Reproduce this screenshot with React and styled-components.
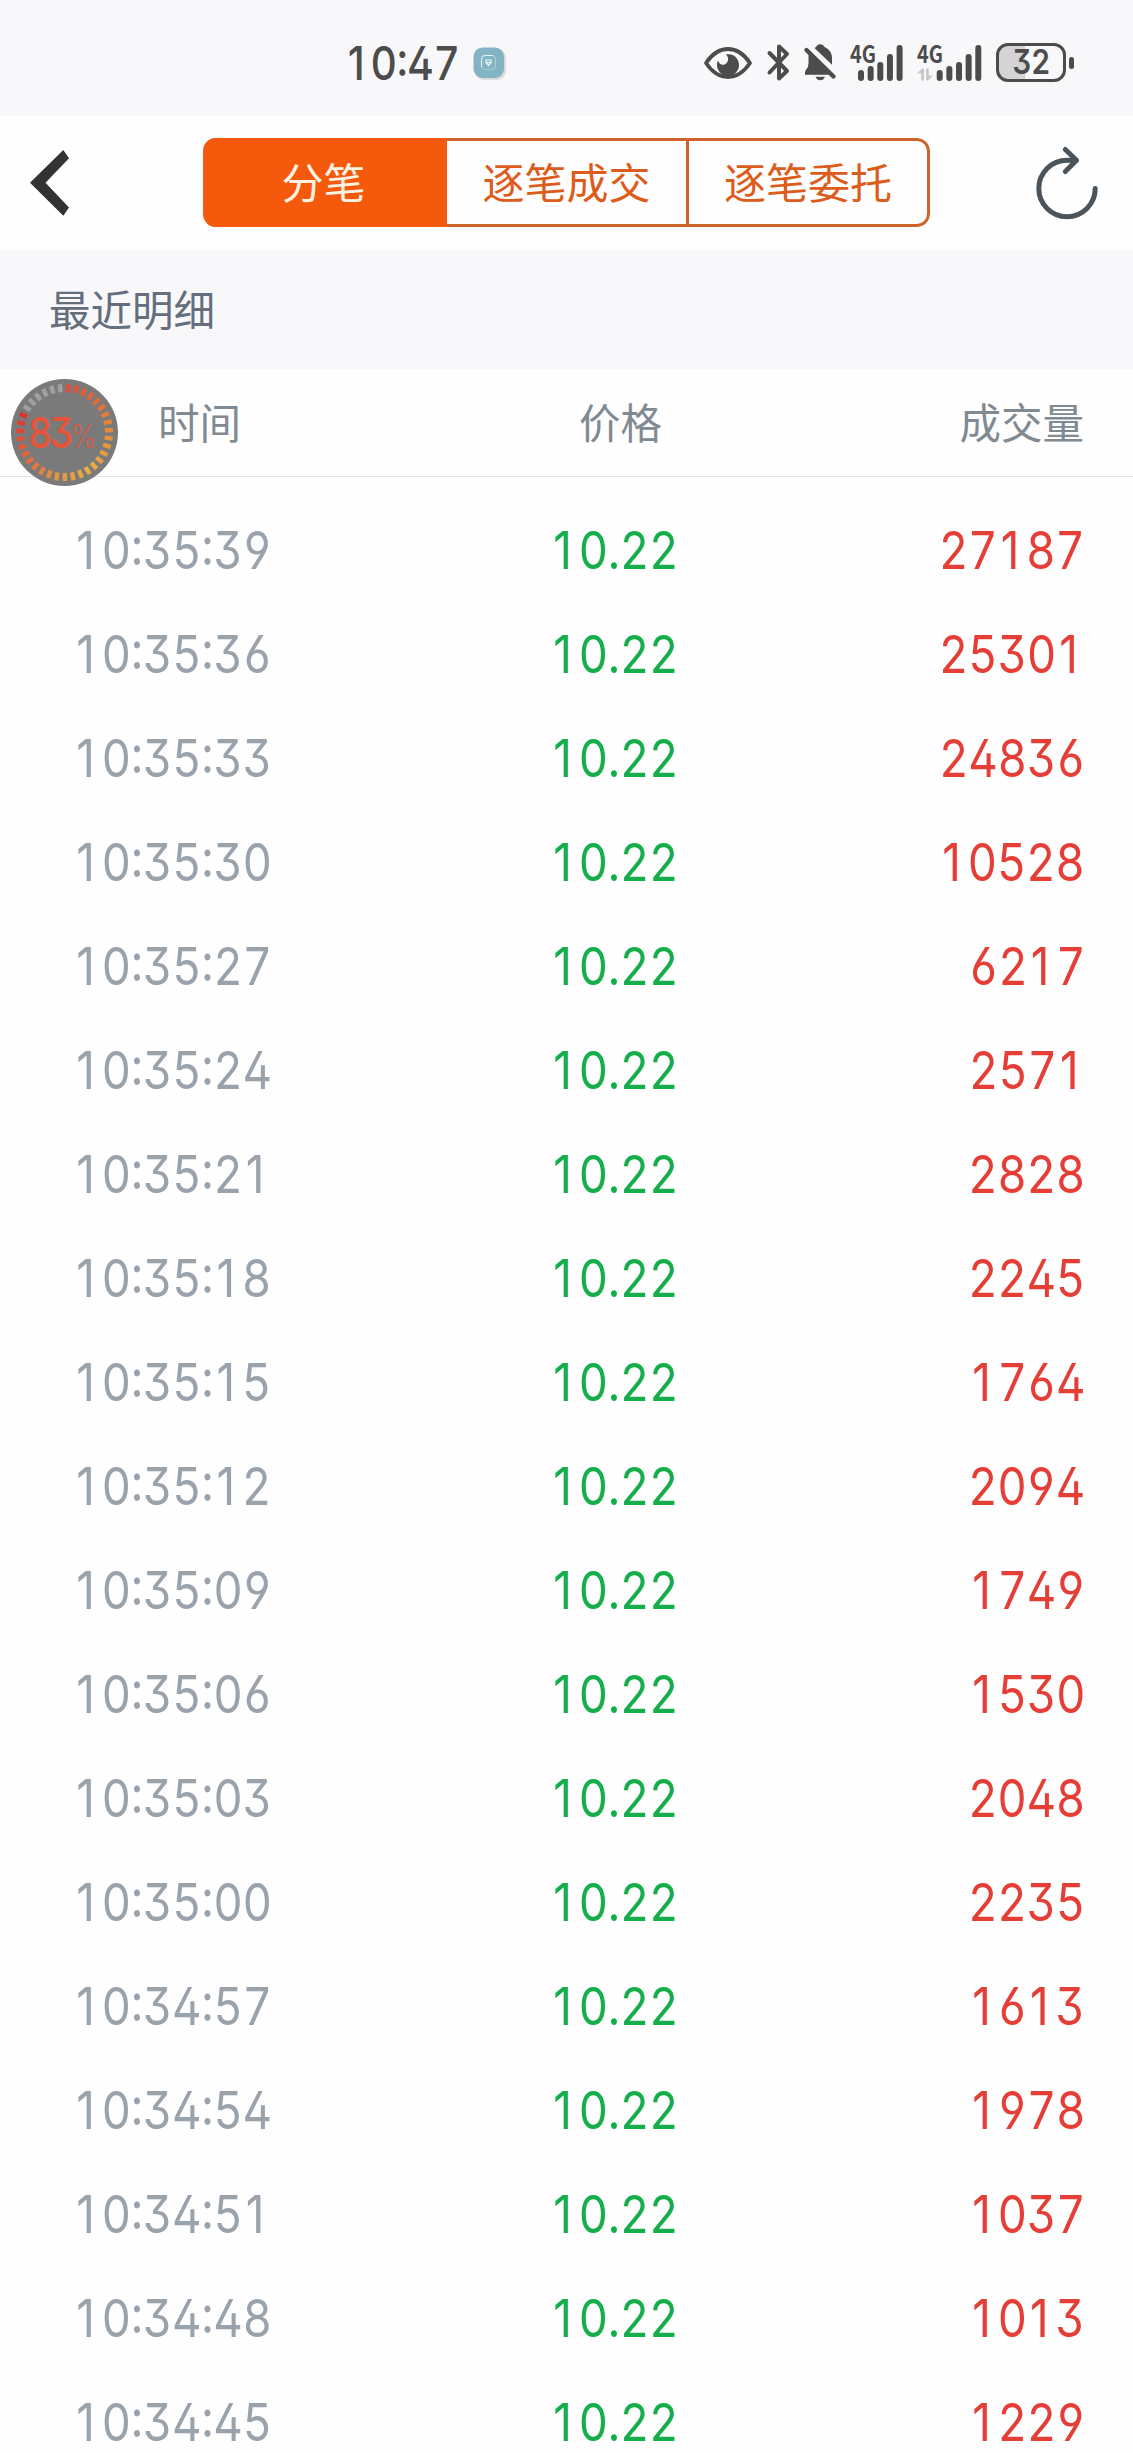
import React from 'react';
import styled, { createGlobalStyle } from 'styled-components';

const GlobalStyle = createGlobalStyle`
  * {
    box-sizing: border-box;
  }

  body {
    margin: 0;
    background: #fefefe;
    font-family: 'Noto Sans CJK SC', sans-serif;
  }
`;

const Screen = styled.div`
  position: relative;
  width: 1133px;
  height: 2453px;
  overflow: hidden;
  background: #fefefe;
`;

// Inter with the open digit shapes, narrowed a little
const Digits = styled.span`
  display: inline-block;
  font-family: 'Inter', sans-serif;
  font-feature-settings: 'tnum', 'calt', 'ss01', 'cv02', 'cv03', 'cv04';
  letter-spacing: -0.009em;
  white-space: nowrap;
  transform: scaleX(0.88);
  transform-origin: ${({ $origin }) => $origin || 'left'} center;
`;

// the tabular "1" has a foot, so take the plain one and centre it in a digit cell
const One = styled.span`
  display: inline-block;
  width: 0.625em;
  padding-right: 0.08em;
  font-feature-settings: 'tnum' 0;
  text-align: center;
`;

const StatusBar = styled.header`
  display: flex;
  align-items: center;
  height: 116px;
  padding: 9px 67px 0 345px;
  background: #f8f8fb;
  color: #4c4c4c;
`;

const Clock = styled(Digits)`
  width: 128px;
  font-size: 46.5px;
  font-weight: 520;
  line-height: 60px;
`;

const StatusIcons = styled.div`
  display: flex;
  align-items: center;
  margin-left: auto;
`;

const Icon = styled.svg`
  display: block;
  flex: none;
  margin-left: ${({ $gap }) => $gap || 0}px;
  overflow: visible;
`;

const Battery = styled.div`
  position: relative;
  display: flex;
  align-items: center;
  justify-content: center;
  width: 70px;
  height: 39px;
  margin-left: 15px;
  border: 3px solid #4c4c4c;
  border-radius: 12px;
  background: linear-gradient(to right, #d4d4d6 26px, transparent 26px);

  &::after {
    content: '';
    position: absolute;
    right: -11px;
    top: 11px;
    width: 5px;
    height: 12px;
    border-radius: 3px;
    background: #4c4c4c;
  }
`;

const BatteryLevel = styled(Digits)`
  font-size: 33.5px;
  font-weight: 600;
  line-height: 33px;
`;

const NavBar = styled.nav`
  display: flex;
  align-items: center;
  height: 134px;
  padding: 0 34px 1px 30px;
`;

const Tabs = styled.div`
  display: grid;
  grid-template-columns: 244px 242px 241px;
  height: 89px;
  margin-left: 134px;
  border-radius: 13px;
  overflow: hidden;
`;

const Tab = styled.button`
  padding: 0 0 4px;
  border: 3px solid ${({ $active }) => ($active ? '#f5590b' : '#cf632c')};
  border-left-width: 0;
  background: ${({ $active }) => ($active ? '#f5590b' : '#fefefe')};
  color: ${({ $active }) => ($active ? '#fff3e4' : '#dc5c1c')};
  font-family: inherit;
  font-size: 42px;
  line-height: 79px;

  &:last-child {
    border-radius: 0 13px 13px 0;
  }
`;

const SectionTitle = styled.h2`
  height: 119px;
  margin: 0;
  padding-left: 49px;
  background: #f8f8fb;
  color: #646e7c;
  font-size: 41.5px;
  font-weight: 400;
  line-height: 117px;
`;

const TableHead = styled.div`
  display: grid;
  grid-template-columns: 421px 1fr auto;
  align-items: center;
  height: 108px;
  padding: 0 49px 4px 158px;
  border-bottom: 1px solid #e4e5e6;
  color: #808a93;
  font-size: 41.5px;
`;

const TableBody = styled.div`
  padding-top: 22px;
`;

const Row = styled.div`
  display: grid;
  grid-template-columns: 477px 1fr auto;
  align-items: center;
  height: 104px;
  padding: 0 48px 0 73px;
`;

const Value = styled(Digits)`
  color: ${({ $color }) => $color};
  font-size: 52px;
  font-weight: 430;
  line-height: 64px;
`;

const Floating = styled.div`
  position: absolute;
  left: 11px;
  top: 379px;
  width: 107px;
  height: 107px;
`;

const FloatingLabel = styled(Digits)`
  position: absolute;
  left: 17px;
  top: 26px;
  color: #e8543a;
  font-size: 43px;
  font-weight: 450;
  letter-spacing: -0.08em;
  line-height: 54px;
`;

const Percent = styled.small`
  font-size: 32px;
  font-weight: 200;
`;

const trades = [
  ['10:35:39', '27187'],
  ['10:35:36', '25301'],
  ['10:35:33', '24836'],
  ['10:35:30', '10528'],
  ['10:35:27', '6217'],
  ['10:35:24', '2571'],
  ['10:35:21', '2828'],
  ['10:35:18', '2245'],
  ['10:35:15', '1764'],
  ['10:35:12', '2094'],
  ['10:35:09', '1749'],
  ['10:35:06', '1530'],
  ['10:35:03', '2048'],
  ['10:35:00', '2235'],
  ['10:34:57', '1613'],
  ['10:34:54', '1978'],
  ['10:34:51', '1037'],
  ['10:34:48', '1013'],
  ['10:34:45', '1229'],
];

const figures = (text) =>
  text.split(/(1)/).map((part, i) => (part === '1' ? <One key={i}>1</One> : part));

const AppBadge = () => (
  <Icon width="32" height="32" viewBox="0 0 32 32">
    <rect x="2" y="2" width="31" height="31" rx="9" fill="#dcdcd8" />
    <rect x="0.5" y="0.5" width="30.5" height="30.5" rx="9" fill="#83b4c3" />
    <rect x="8.5" y="8.5" width="14" height="14" rx="3.5" fill="none" stroke="#a9cdd7" />
    <path d="M8.5 20v-8q0-3.500 3.500-3.500h8" fill="none" stroke="#e6f3f6" />
    <path d="M13 13h5v2.500l-2.500 3-2.500-3zM13.500 15.500h4" fill="none" stroke="#eef8fa" strokeWidth="1.200" />
  </Icon>
);

const EyeIcon = () => (
  <Icon width="48" height="32" viewBox="0 0 48 32">
    <path
      d="M2 16C8 7 16 2 24 2s16 5 22 14c-6 9-14 14-22 14S8 25 2 16z"
      fill="none"
      stroke="#4c4c4c"
      strokeWidth="3.800"
      strokeLinejoin="round"
    />
    <path
      d="M22 7.500C29 6 35 11 35 18c0 6-5 11-11 11S13 24 13 18c0-2 .3-3 1-4.500 1 3.500 4 5 6.500 4 4-1.500 5-6.500 1.500-10z"
      fill="#4c4c4c"
    />
  </Icon>
);

const BluetoothIcon = () => (
  <Icon $gap={15} width="23" height="37" viewBox="0 0 23 37">
    <path
      d="M2.500 9l17.500 18-8 7.500V2.500l8 7.500L2.500 28.500"
      fill="none"
      stroke="#4c4c4c"
      strokeWidth="4"
      strokeLinecap="round"
      strokeLinejoin="round"
    />
  </Icon>
);

const MutedIcon = () => (
  <Icon $gap={14} width="32" height="37" viewBox="0 0 32 37">
    <path d="M4.500 10l19 18.500H1.500q-1-1.500 1-3.500 2-2 2-6z" fill="#4c4c4c" />
    <path d="M1 28h24v2.800H1z" fill="#4c4c4c" />
    <path d="M10.500 4Q12.500 3 13 1.500 16-1 19.500 1.500q.5 1.500 2 2C26 6 28 9.500 28 14v6.800z" fill="#4c4c4c" />
    <path d="M11.500 32.800h9.500q-1.500 3.500-4.700 3.500t-4.800-3.500z" fill="#4c4c4c" />
    <path d="M2.500 6l27 26.500" stroke="#4c4c4c" strokeWidth="4.400" strokeLinecap="round" />
  </Icon>
);

const bars = [11, 15, 19, 27, 36];

const SignalIcon = ({ gap, offset, data }) => (
  <Icon $gap={gap} width={offset + 41.6} height="37" viewBox={`0 0 ${offset + 41.6} 37`}>
    <text
      x="0"
      y="18.500"
      fill="#4c4c4c"
      fontFamily="Noto Sans CJK SC, sans-serif"
      fontSize="24"
      fontWeight="700"
      textLength="26"
      lengthAdjust="spacingAndGlyphs"
    >
      4G
    </text>
    {data && (
      <path d="M0 29.500L5 24.500h2v12H4.200v-7zM9 24.500h2.800v7H16l-5 5H9z" fill="#c8c8ca" />
    )}
    {bars.map((height, i) => (
      <rect key={height} x={offset - 3 + i * 9.65} y={37 - height} width="6" height={height} rx="3" fill="#4c4c4c" />
    ))}
  </Icon>
);

const BackIcon = () => (
  <Icon width="39" height="66" viewBox="0 0 39 66">
    <path d="M33.300 0L39 8.300 15.500 32.800 39 57.500l-5.700 8.300L0 32.800z" fill="#333" />
  </Icon>
);

const RefreshIcon = () => (
  <Icon $gap={106} width="63" height="73" viewBox="0 0 63 73">
    <path
      d="M59.200 42.500A28.200 28.200 0 1 1 31 14.300h9.500M29.300 3.500l11.200 10.800-11.200 11.200"
      fill="none"
      stroke="#4b545b"
      strokeWidth="5"
      strokeLinecap="round"
      strokeLinejoin="round"
    />
  </Icon>
);

const TICKS = 35;
const ACTIVE_TICKS = 29;
const stops = [
  [0, [224, 76, 56]],
  [7, [226, 132, 62]],
  [14, [234, 174, 66]],
  [18, [226, 150, 66]],
  [23, [226, 100, 60]],
  [28, [222, 50, 48]],
];

const tickColor = (index) => {
  if (index >= ACTIVE_TICKS) return '#a0a0a0';
  const next = Math.max(1, stops.findIndex(([at]) => at >= index));
  const [from, a] = stops[next - 1];
  const [to, b] = stops[next];
  const t = (index - from) / (to - from);
  return `rgb(${a.map((c, i) => Math.round(c + (b[i] - c) * t)).join(',')})`;
};

const UsageGauge = () => (
  <Floating>
    <Icon width="107" height="107" viewBox="0 0 107 107">
      <circle cx="53.500" cy="53.500" r="53.500" fill="#7a7a7a" />
      {Array.from({ length: TICKS }, (_, i) => (
        <rect
          key={i}
          x="51.300"
          y="5"
          width="4.400"
          height="8"
          fill={tickColor(i)}
          transform={`rotate(${4.7 + (i * 360) / TICKS} 53.500 53.500)`}
        />
      ))}
    </Icon>
    <FloatingLabel>
      83
      <Percent>%</Percent>
    </FloatingLabel>
  </Floating>
);

const App = () => (
  <Screen>
    <GlobalStyle />
    <StatusBar>
      <Clock>{figures('10:47')}</Clock>
      <AppBadge />
      <StatusIcons>
        <EyeIcon />
        <BluetoothIcon />
        <MutedIcon />
        <SignalIcon gap={14} offset={11} />
        <SignalIcon gap={14} offset={22.7} data />
        <Battery>
          <BatteryLevel $origin="center">32</BatteryLevel>
        </Battery>
      </StatusIcons>
    </StatusBar>
    <NavBar>
      <BackIcon />
      <Tabs>
        <Tab $active>分笔</Tab>
        <Tab>逐笔成交</Tab>
        <Tab>逐笔委托</Tab>
      </Tabs>
      <RefreshIcon />
    </NavBar>
    <SectionTitle>最近明细</SectionTitle>
    <TableHead>
      <span>时间</span>
      <span>价格</span>
      <span>成交量</span>
    </TableHead>
    <TableBody>
      {trades.map(([time, volume]) => (
        <Row key={time}>
          <Value $color="#9aa3ac">{figures(time)}</Value>
          <Value $color="#16ad4b">{figures('10.22')}</Value>
          <Value $color="#e53e37" $origin="right">{figures(volume)}</Value>
        </Row>
      ))}
    </TableBody>
    <UsageGauge />
  </Screen>
);

export default App;
